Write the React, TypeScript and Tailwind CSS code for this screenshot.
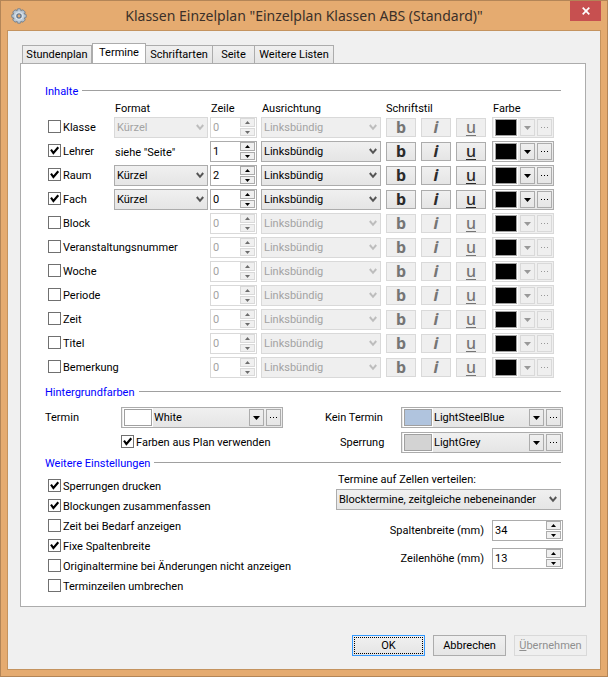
import React, { useState } from "react";

type RowData = {
  label: string;
  checked?: boolean;
  format?: "select" | "hint";
  line: string;
};

const ROWS: RowData[] = [
  { label: "Klasse", format: "select", line: "0" },
  { label: "Lehrer", checked: true, format: "hint", line: "1" },
  { label: "Raum", checked: true, format: "select", line: "2" },
  { label: "Fach", checked: true, format: "select", line: "0" },
  { label: "Block", line: "0" },
  { label: "Veranstaltungsnummer", line: "0" },
  { label: "Woche", line: "0" },
  { label: "Periode", line: "0" },
  { label: "Zeit", line: "0" },
  { label: "Titel", line: "0" },
  { label: "Bemerkung", line: "0" },
];

const OPTIONS: { label: string; checked?: boolean }[] = [
  { label: "Sperrungen drucken", checked: true },
  { label: "Blockungen zusammenfassen", checked: true },
  { label: "Zeit bei Bedarf anzeigen" },
  { label: "Fixe Spaltenbreite", checked: true },
  { label: "Originaltermine bei Änderungen nicht anzeigen" },
  { label: "Terminzeilen umbrechen" },
];

const FACE =
  "border border-[#acacac] bg-linear-to-b from-[#f0f0f0] to-[#e5e5e5] disabled:border-[#d9d9d9] disabled:bg-none disabled:bg-[#efefef]";

function Checkbox({
  label,
  checked,
  onChange,
}: {
  label: string;
  checked?: boolean;
  onChange?: (value: boolean) => void;
}) {
  return (
    <label className="flex h-[14px] items-start gap-[2px] whitespace-nowrap">
      <span className="grid size-[13px] shrink-0">
        <input
          type="checkbox"
          defaultChecked={checked}
          onChange={(e) => onChange?.(e.target.checked)}
          className="peer col-start-1 row-start-1 size-[13px] appearance-none border border-[#707070] bg-white"
        />
        <svg
          viewBox="0 0 13 13"
          className="pointer-events-none invisible col-start-1 row-start-1 size-[13px] peer-checked:visible"
        >
          <path d="M3 5.6 5.4 9 10.3 3.2" fill="none" stroke="#000" strokeWidth="2.1" />
        </svg>
      </span>
      {label}
    </label>
  );
}

function Select({ value, label, disabled }: { value: string; label: string; disabled?: boolean }) {
  return (
    <span className="grid h-[21px] w-full">
      <select
        aria-label={label}
        disabled={disabled}
        className={`${FACE} col-start-1 row-start-1 h-[21px] w-full appearance-none pr-4 pl-[2px] text-black disabled:text-[#a3a3a3] disabled:opacity-100`}
      >
        <option>{value}</option>
      </select>
      <svg
        viewBox="0 0 8 7"
        className={`pointer-events-none col-start-1 row-start-1 mr-1 h-[7px] w-2 self-center justify-self-end ${
          disabled ? "text-[#bdbdbd]" : "text-[#555]"
        }`}
      >
        <path d="M0.8 1 4 4.8 7.2 1" fill="none" stroke="currentColor" strokeWidth="2" />
      </svg>
    </span>
  );
}

function Triangle({ up }: { up?: boolean }) {
  return (
    <svg viewBox="0 0 5 3" className="h-[3px] w-[5px]">
      <path d={up ? "M0 3 2.5 0 5 3z" : "M0 0h5L2.5 3z"} fill="currentColor" />
    </svg>
  );
}

function Spinner({
  id,
  value,
  label,
  disabled,
}: {
  id?: string;
  value: string;
  label?: string;
  disabled?: boolean;
}) {
  const [text, setText] = useState(value);
  const step = (delta: number) => setText(String(Math.max(0, Number(text) + delta)));
  const button =
    "flex w-[15px] items-center justify-center border border-[#acacac] bg-[#f0f0f0] text-black disabled:border-[#d9d9d9] disabled:text-[#6d6d6d]";
  return (
    <span
      className={`flex h-[21px] w-full border bg-white pr-px ${
        disabled ? "border-[#d9d9d9]" : "border-[#acacac]"
      }`}
    >
      <input
        id={id}
        type="text"
        inputMode="numeric"
        aria-label={label}
        disabled={disabled}
        value={text}
        onChange={(e) => setText(e.target.value)}
        className="h-[18px] w-0 min-w-0 flex-1 pl-[2px] text-black outline-none disabled:text-[#a3a3a3]"
      />
      <span className="flex flex-col gap-px">
        <button type="button" aria-label="Erhöhen" disabled={disabled} onClick={() => step(1)} className={`${button} h-[9px]`}>
          <Triangle up />
        </button>
        <button type="button" aria-label="Verringern" disabled={disabled} onClick={() => step(-1)} className={`${button} h-2`}>
          <Triangle />
        </button>
      </span>
    </span>
  );
}

function StyleButtons({ disabled }: { disabled: boolean }) {
  const base = `${FACE} flex h-[19px] w-[30px] items-center justify-center pb-[2px] font-['Noto_Sans','Open_Sans',sans-serif] text-[16px] leading-[16px] text-[#2b2b2b] disabled:text-[#757575]`;
  return (
    <span className="flex gap-[5px]">
      <button type="button" aria-label="Fett" disabled={disabled} className={`${base} font-bold`}>
        b
      </button>
      <button type="button" aria-label="Kursiv" disabled={disabled} className={`${base} font-bold italic`}>
        i
      </button>
      <button type="button" aria-label="Unterstrichen" disabled={disabled} className={`${base} font-medium underline decoration-1 underline-offset-2`}>
        u
      </button>
    </span>
  );
}

function ColorPicker({
  label,
  swatch,
  name,
  disabled,
}: {
  label: string;
  swatch: string;
  name?: string;
  disabled?: boolean;
}) {
  const button =
    "flex h-[17px] w-[15px] shrink-0 items-center justify-center border border-[#acacac] text-black disabled:border-[#d9d9d9] disabled:text-[#999]";
  return (
    <span
      role="group"
      aria-label={label}
      className={`flex h-[21px] items-center gap-[2px] border px-px ${
        disabled
          ? "border-[#d9d9d9] bg-[#efefef]"
          : "border-[#acacac] bg-linear-to-b from-[#f0f0f0] to-[#e5e5e5]"
      }`}
    >
      <span
        className={`h-[17px] shrink-0 border border-[#a0a0a0] ring-1 ring-white ${
          name ? "ml-px w-[28px]" : "mr-px ml-px w-[22px]"
        } ${swatch}`}
      />
      {name && <span className="flex-1">{name}</span>}
      <button type="button" aria-label={`${label}: Liste`} disabled={disabled} className={button}>
        <svg viewBox="0 0 7 4" className="h-1 w-[7px]">
          <path d="M0 0h7L3.500 4z" fill="currentColor" />
        </svg>
      </button>
      <button type="button" aria-label={`${label}: Auswahl`} disabled={disabled} className={button}>
        <svg viewBox="0 0 7 1" className="h-px w-[7px]" shapeRendering="crispEdges">
          <path d="M0 0h1v1H0zM3 0h1v1H3zM6 0h1v1H6z" fill="currentColor" />
        </svg>
      </button>
    </span>
  );
}

function SectionTitle({ children }: { children: React.ReactNode }) {
  return (
    <h2 className="mr-[2px] flex h-[14px] items-start gap-1 whitespace-nowrap text-[#0000ff]">
      {children}
      <span className="mt-[6px] h-px flex-1 bg-[#a0a0a0]" />
    </h2>
  );
}

const GRID = "grid grid-cols-[minmax(0,1fr)_96px_51px_125px_106px_62px]";

function ContentRow({ row }: { row: RowData }) {
  const [enabled, setEnabled] = useState(!!row.checked);
  return (
    <div className={`${GRID} h-[21px] items-center`}>
      <div className={row.format ? "pb-px" : "col-span-2 pb-px"}>
        <Checkbox label={row.label} checked={row.checked} onChange={setEnabled} />
      </div>
      {row.format === "select" && (
        <div className="pr-[2px]">
          <Select value="Kürzel" label={`Format ${row.label}`} disabled={!enabled} />
        </div>
      )}
      {row.format === "hint" && <div className="pt-[2px] pl-px">siehe "Seite"</div>}
      <div className="pr-1">
        <Spinner value={row.line} label={`Zeile ${row.label}`} disabled={!enabled} />
      </div>
      <div className="pr-[5px]">
        <Select value="Linksbündig" label={`Ausrichtung ${row.label}`} disabled={!enabled} />
      </div>
      <StyleButtons disabled={!enabled} />
      <ColorPicker label={`Farbe ${row.label}`} swatch="bg-black" disabled={!enabled} />
    </div>
  );
}

function Tab({ children, active, width }: { children: string; active?: boolean; width: string }) {
  return (
    <button
      type="button"
      role="tab"
      aria-selected={!!active}
      className={`${width} border border-b-0 border-[#acacac] whitespace-nowrap ${
        active
          ? "-mb-px h-[21px] bg-white pb-[2px]"
          : "h-[18px] bg-linear-to-b from-[#f0f0f0] to-[#e5e5e5] pt-px not-first:border-l-0"
      }`}
    >
      {children}
    </button>
  );
}

function Gear() {
  return (
    <svg viewBox="0 0 16 16" className="size-4">
      {[0, 45, 90, 135].map((a) => (
        <rect
          key={a}
          x="6"
          y="0.800"
          width="4"
          height="14.400"
          rx="1.200"
          fill="#b4c2cf"
          stroke="#6b7988"
          strokeWidth="0.900"
          transform={`rotate(${a} 8 8)`}
        />
      ))}
      <circle cx="8" cy="8" r="5.300" fill="#c3d0dc" />
      <circle cx="8" cy="8" r="3.600" fill="#eef3f7" />
      <circle cx="8" cy="8" r="2.100" fill="#e5ab70" stroke="#64778c" strokeWidth="1.400" />
    </svg>
  );
}

export default function App() {
  return (
    <div className="flex min-h-screen w-full flex-col border border-[#b38557] bg-[#e5ab70] px-[6px] pb-[6px] font-['Roboto','Liberation_Sans',sans-serif] text-[11px] leading-[16px] text-black">
      <header className="grid h-[29px] grid-cols-[31px_1fr_31px] items-center">
        <span className="pl-1">
          <Gear />
        </span>
        <h1 className="text-center font-['Noto_Sans','Open_Sans',sans-serif] text-[14px] leading-5 whitespace-nowrap text-[#3b3029]">
          Klassen Einzelplan "Einzelplan Klassen ABS (Standard)"
        </h1>
        <button
          type="button"
          aria-label="Schließen"
          className="flex h-5 w-[31px] items-center justify-center self-start bg-[#c75050]"
        >
          <svg viewBox="0 0 8 8" className="size-2">
            <path d="M0.700 0.700 7.300 7.300M7.300 0.700 0.700 7.300" stroke="#fff" strokeWidth="1.700" />
          </svg>
        </button>
      </header>

      <main className="flex flex-1 flex-col border border-[#c4935f] bg-[#f0f0f0] px-3 pt-3 pb-[13px]">
        <div role="tablist" className="flex items-end pl-[2px]">
          <Tab width="w-[70px]">Stundenplan</Tab>
          <Tab width="w-[54px]" active>
            Termine
          </Tab>
          <Tab width="w-[67px]">Schriftarten</Tab>
          <Tab width="w-[42px]">Seite</Tab>
          <Tab width="w-[79px]">Weitere Listen</Tab>
        </div>

        <div role="tabpanel" className="mr-[2px] border border-[#acacac] bg-white pt-5 pr-[22px] pb-[10px] pl-6">
          <SectionTitle>Inhalte</SectionTitle>
          <div className="mt-[3px] pr-[9px] pl-[3px]">
            <div className={`${GRID} mb-[2px] h-[14px]`}>
              <span className="col-start-2 pl-px">Format</span>
              <span className="pl-px">Zeile</span>
              <span className="pl-px">Ausrichtung</span>
              <span>Schriftstil</span>
              <span className="pl-px">Farbe</span>
            </div>
            <div className="flex flex-col gap-[3px]">
              {ROWS.map((row) => (
                <ContentRow key={row.label} row={row} />
              ))}
            </div>
          </div>

          <div className="mt-[7px]">
            <SectionTitle>Hintergrundfarben</SectionTitle>
          </div>
          <div className="mt-2 grid grid-cols-[76px_162px_1fr_162px] items-center gap-y-1">
            <span>Termin</span>
            <ColorPicker label="Termin" swatch="bg-white" name="White" />
            <span className="pl-[42px]">Kein Termin</span>
            <ColorPicker label="Kein Termin" swatch="bg-[#b0c4de]" name="LightSteelBlue" />
            <div className="col-start-2 pb-px">
              <Checkbox label="Farben aus Plan verwenden" checked />
            </div>
            <span className="pl-[57px]">Sperrung</span>
            <ColorPicker label="Sperrung" swatch="bg-[#d3d3d3]" name="LightGrey" />
          </div>

          <div className="mt-[3px]">
            <SectionTitle>Weitere Einstellungen</SectionTitle>
          </div>
          <div className="mt-[2px] flex justify-between">
            <div className="flex flex-col pt-1 pl-[3px]">
              {OPTIONS.map((o) => (
                <div key={o.label} className="flex h-5 items-center">
                  <Checkbox label={o.label} checked={o.checked} />
                </div>
              ))}
            </div>
            <div className="flex w-[227px] flex-col">
              <span className="pl-[2px]">Termine auf Zellen verteilen:</span>
              <div className="mt-px mr-[2px]">
                <Select value="Blocktermine, zeitgleiche nebeneinander" label="Termine auf Zellen verteilen" />
              </div>
              <div className="mt-[10px] grid grid-cols-[1fr_71px] items-center gap-x-2 gap-y-[7px] text-right">
                <label htmlFor="column-width">Spaltenbreite (mm)</label>
                <Spinner id="column-width" value="34" />
                <label htmlFor="row-height">Zeilenhöhe (mm)</label>
                <Spinner id="row-height" value="13" />
              </div>
            </div>
          </div>
        </div>

        <div className="mt-7 mr-px flex justify-end gap-2">
          <button
            type="button"
            className="h-[21px] w-[73px] border border-[#3399ff] bg-linear-to-b from-[#f0f0f0] to-[#e5e5e5] p-px"
          >
            <span className="block border border-dotted border-black leading-[15px]">OK</span>
          </button>
          <button type="button" className={`${FACE} h-[21px] w-[73px]`}>
            Abbrechen
          </button>
          <button type="button" disabled className={`${FACE} h-[21px] w-[73px] text-[#8f8f8f]`}>
            <span className="underline">Ü</span>bernehmen
          </button>
        </div>
      </main>
    </div>
  );
}
